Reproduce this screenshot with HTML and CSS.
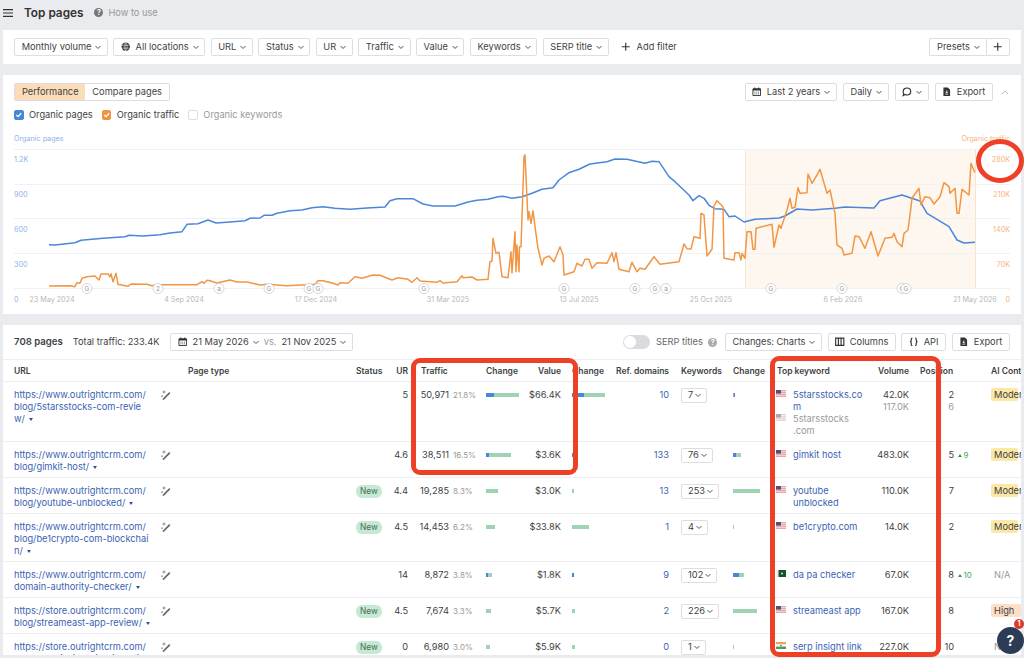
FILE: index.html
```html
<!DOCTYPE html>
<html lang="en">
<head>
  <meta charset="UTF-8">
  <meta name="viewport" content="width=device-width, initial-scale=1.0">
  <title>Top pages</title>
  <link rel="stylesheet" href="styles.css">
</head>
<body>

<!-- shared icons -->
<svg class="defs" width="0" height="0">
  <symbol id="chev" viewBox="0 0 8 8"><path d="M1.5 3l2.5 2.5L6.5 3" fill="none" stroke="currentColor" stroke-width="1"/></symbol>
  <symbol id="plus" viewBox="0 0 10 10"><path d="M5 .8v8.4M.8 5h8.4" fill="none" stroke="currentColor" stroke-width="1.2"/></symbol>
  <symbol id="cal" viewBox="0 0 10 10"><path d="M1 2h8v7H1z" fill="none" stroke="currentColor" stroke-width="1"/><path d="M1 1.600h8v2.200H1zM2.400.6h1v1.500h-1zM6.600.6h1v1.500h-1zM2.600 5h1v.9h-1zM4.500 5h1v.9h-1zM6.400 5h1v.9h-1zM2.600 6.800h1v.9h-1zM4.500 6.800h1v.9h-1zM6.400 6.800h1v.9h-1z" fill="currentColor"/></symbol>
  <symbol id="doc" viewBox="0 0 10 10"><path d="M1.500.5h4.600L8.500 3v6.500h-7z" fill="currentColor"/><path d="M5 3.600v2.600M3.700 5l1.300 1.400L6.300 5M3.400 7.500h3.200" fill="none" stroke="#fff" stroke-width=".8"/></symbol>
  <symbol id="wand" viewBox="0 0 10 10"><path d="M2 9.500L8.800 2.700" fill="none" stroke="#666" stroke-width="1.700"/><path d="M3 .5v3M1.500 2h3M1 5.500v1.500M.3 6.200h1.500" fill="none" stroke="#777" stroke-width=".8"/></symbol>
  <symbol id="us" viewBox="0 0 10 7"><rect width="10" height="7" fill="#e9a5a8"/><path d="M0 1.500h10M0 3.500h10M0 5.500h10" stroke="#f3dcdc" stroke-width=".8"/><rect width="5" height="3.600" fill="#47557f"/></symbol>
  <symbol id="pk" viewBox="0 0 10 7"><rect width="10" height="7" fill="#14532d"/><rect width="2.500" height="7" fill="#eee"/><circle cx="6" cy="3.500" r="1" fill="#cfe3d5"/></symbol>
  <symbol id="in" viewBox="0 0 10 7"><rect width="10" height="2.400" fill="#f0a04e"/><rect y="2.400" width="10" height="2.200" fill="#f6f6f6"/><rect y="4.600" width="10" height="2.400" fill="#4f9a55"/><circle cx="5" cy="3.500" r=".8" fill="#47557f"/></symbol>
</svg>

<div class="page-head">
  <svg class="burger" width="10" height="8" viewBox="0 0 10 8"><path d="M0 .7h10M0 4h10M0 7.300h10" stroke="#333" stroke-width="1.200"/></svg>
  <h1>Top pages</h1>
  <span class="how-dot">?</span>
  <span class="how-text">How to use</span>
</div>

<div class="card filters">
  <button class="btn">Monthly volume <svg class="chev"><use href="#chev"/></svg></button>
  <button class="btn">
    <svg class="ico" viewBox="0 0 10 10"><circle cx="5" cy="5" r="4.400" fill="#333"/><path d="M.8 3.500h8.400M.8 6.500h8.400M5 .6v8.800M5 .6C2.800 3 2.800 7 5 9.400M5 .6C7.200 3 7.200 7 5 9.400" fill="none" stroke="#fff" stroke-width=".5"/></svg>
    All locations <svg class="chev"><use href="#chev"/></svg>
  </button>
  <button class="btn">URL <svg class="chev"><use href="#chev"/></svg></button>
  <button class="btn">Status <svg class="chev"><use href="#chev"/></svg></button>
  <button class="btn">UR <svg class="chev"><use href="#chev"/></svg></button>
  <button class="btn">Traffic <svg class="chev"><use href="#chev"/></svg></button>
  <button class="btn">Value <svg class="chev"><use href="#chev"/></svg></button>
  <button class="btn">Keywords <svg class="chev"><use href="#chev"/></svg></button>
  <button class="btn">SERP title <svg class="chev"><use href="#chev"/></svg></button>
  <span class="add-filter"><svg class="ico"><use href="#plus"/></svg>Add filter</span>
  <span class="btn-group">
    <button class="btn">Presets <svg class="chev"><use href="#chev"/></svg></button>
    <button class="btn btn-plus"><svg class="ico"><use href="#plus"/></svg></button>
  </span>
</div>

<div class="card chart-card">
  <div class="chart-top">
    <div class="tabs">
      <span class="tab tab-on">Performance</span>
      <span class="tab">Compare pages</span>
    </div>
    <div class="chart-tools">
      <button class="btn"><svg class="ico"><use href="#cal"/></svg> Last 2 years <svg class="chev"><use href="#chev"/></svg></button>
      <button class="btn">Daily <svg class="chev"><use href="#chev"/></svg></button>
      <button class="btn"><svg class="ico" viewBox="0 0 10 10"><path d="M5.300 1C7.600 1 9.200 2.600 9.200 4.700S7.600 8.400 5.300 8.400C4.500 8.400 3.800 8.200 3.200 7.900L1.200 9 1.800 6.800C1.400 6.200 1.200 5.500 1.200 4.700 1.200 2.600 3 1 5.300 1z" fill="none" stroke="#333" stroke-width="1.200"/></svg> <svg class="chev"><use href="#chev"/></svg></button>
      <button class="btn"><svg class="ico"><use href="#doc"/></svg> Export</button>
      <svg class="collapse" viewBox="0 0 10 6"><path d="M1 5l4-4 4 4" fill="none" stroke="#aaa" stroke-width="1"/></svg>
    </div>
  </div>
  <div class="checks">
    <span class="check"><span class="box box-blue"><svg viewBox="0 0 10 10"><path d="M2.500 5.200l1.800 1.800 3.300-3.600" fill="none" stroke="#fff" stroke-width="1.300"/></svg></span>Organic pages</span>
    <span class="check"><span class="box box-orange"><svg viewBox="0 0 10 10"><path d="M2.500 5.200l1.800 1.800 3.300-3.600" fill="none" stroke="#fff" stroke-width="1.300"/></svg></span>Organic traffic</span>
    <span class="check check-off"><span class="box"></span>Organic keywords</span>
  </div>

  <svg class="chart" width="1018" height="180" viewBox="3 130 1018 180">
    <rect x="745" y="149" width="231" height="139" fill="#fdf7f0"/>
    <path d="M745.500 149v139M975.500 149v139" stroke="#fae3cc" stroke-width="1"/>
    <path class="grid" d="M14 149.500h996M14 184.500h996M14 218.500h996M14 253.500h996M14 288.500h996"/>

    <text class="lbl-blue" x="14" y="141">Organic pages</text>
    <text class="lbl-blue" x="14" y="162">1.2K</text>
    <text class="lbl-blue" x="14" y="197">900</text>
    <text class="lbl-blue" x="14" y="232">600</text>
    <text class="lbl-blue" x="14" y="267">300</text>
    <text class="lbl-blue" x="14" y="302">0</text>

    <text class="lbl-orange" x="1010" y="141">Organic traffic</text>
    <text class="lbl-orange" x="1010" y="162">280K</text>
    <text class="lbl-orange" x="1010" y="197">210K</text>
    <text class="lbl-orange" x="1010" y="232">140K</text>
    <text class="lbl-orange" x="1010" y="267">70K</text>
    <text class="lbl-orange" x="1010" y="302">0</text>

    <text class="lbl-date" x="52" y="302">23 May 2024</text>
    <text class="lbl-date" x="184" y="302">4 Sep 2024</text>
    <text class="lbl-date" x="316" y="302">17 Dec 2024</text>
    <text class="lbl-date" x="448" y="302">31 Mar 2025</text>
    <text class="lbl-date" x="579" y="302">13 Jul 2025</text>
    <text class="lbl-date" x="711" y="302">25 Oct 2025</text>
    <text class="lbl-date" x="843" y="302">6 Feb 2026</text>
    <text class="lbl-date" x="975" y="302">21 May 2026</text>

    <path class="line-blue" d="M49 244.700L55 245L75 242.700L81 240.300L103 238.300L125 236.700L129 235.300L143 236L160 234.700L170 233L182 231.700L187 224.300L198 223.700L208 220L216 223L230 222L245 220.700L250 218.300L260 218L264 215.300L272 215.300L277 213.300L290 210.700L302 210L312 207.700L323 206.700L335 208.300L350 209.300L367 208L385 207L390 200.700L397 198.700L413 198.700L423 204L433 206L455 206L468 202L477 200.300L488 199.300L498 196.700L503 196.300L512 198.300L522 196.700L532 193.300L542 189.300L553 187.700L559 180L569 172.700L579 169.300L590 164L607 161.700L615 159L627 159.300L645 163.300L652 161.300L659 161.700L669 176.700L675 181.700L689 195L693 200.700L699 195.700L704 198.300L709 205.300L715 208.700L724 209.300L729 216.700L735 216L744 222L755 219.300L779 218L785 216L797 209L812 210L835 208.300L845 207L874 208L880 200.700L902 195L920 201L927 213.300L949 226.700L957 240L964 243L975 242.300"/>
    <path class="line-orange" d="M49 286L70 285.700L75 286.700L77 282.700L80 283.300L82 278.300L87 276.700L95 276L99 280L101 274L108 274L110 276.700L111 273.700L113 281.700L116 273.300L118 284.300L128 286.300L131 284L147 284.300L152 285.700L157 284.700L197 284.700L202 281.700L204 283.300L207 280.300L210 280.700L217 283L230 280L237 282L247 282L260 285L267 284.300L287 285.700L315 284.300L318 280.700L323 280.700L333 283.300L338 285L340 282.700L348 283.300L355 276.700L362 278.300L373 275L380 275.300L392 280L398 277.700L408 279.300L412 282.300L417 277.700L420 281L437 282.300L440 280.700L443 283L457 281.700L462 275.700L463 277.700L472 277L477 280L488 279.300L490 261.700L492 261L493 238.300L496 253.300L499 252.300L502 276.700L508 277.700L511 251.700L512 273L515 231.700L516 271.700L517 245L519 271.700L519.500 246.700L521 246.700L524 156.700L525 155L528 220L529 211.700L531 223.300L533 210.700L535 226.700L538 248.300L542 265L544 258.300L549 256L554 261.700L560 246.700L563 255L564 275L574 271.700L577 263.300L582 266L585 259.300L589 259.300L592 268.300L597 262.700L607 263.300L612 252.700L614 261.700L616 252.700L619 269.300L629 271.700L632 262.300L637 271.700L640 268.300L645 269.300L654 256.700L660 264.300L679 261.700L684 244L687 248.700L691 249L694 236.700L700 238.300L701 213.300L704 215L707 256L712 249.300L714 206L717 200.700L723 206.700L724 258.300L734 260L735 252.700L739 252.700L741 260L742 253.300L745 258.300L747 231.700L751 231.700L753 249.300L755 249.300L756 228.300L772 224.300L774 247.300L776 238.300L779 225L781 228.300L787 210L790 198.300L792 208.300L795 207.300L798 187.700L800 193.300L807 192.700L808 174L812 183.300L817 175L820 169.300L827 193.300L830 190L835 213.300L837 245L842 248.300L844 255L852 253.300L855 236L859 236.700L865 248.300L871 231.700L878 256L885 238.300L892 237.300L894 233.300L897 241.700L902 246.700L904 233.300L908 230L910 215L912 198.300L919 188.300L921 205L925 196.700L930 197.700L934 204L940 196.700L944 182.700L949 186.700L950 193.300L955 188.300L957 213.300L959 213.300L962 189.300L969 195L971 163.300L974 170.700L975 172.300"/>

    <g class="marks">
      <circle cx="87" cy="288.500" r="5"/><text x="87" y="291">G</text>
      <circle cx="158" cy="288.500" r="5"/><text x="158" y="291">2</text>
      <circle cx="219" cy="288.500" r="5"/><text x="219" y="291">a</text>
      <circle cx="269" cy="288.500" r="5"/><text x="269" y="291">G</text>
      <circle cx="309" cy="288.500" r="5"/><text x="309" y="291">G</text>
      <circle cx="318" cy="288.500" r="5"/><text x="318" y="291">G</text>
      <circle cx="424" cy="288.500" r="5"/><text x="424" y="291">G</text>
      <circle cx="564" cy="288.500" r="5"/><text x="564" y="291">G</text>
      <circle cx="635" cy="288.500" r="5"/><text x="635" y="291">G</text>
      <circle cx="655" cy="288.500" r="5"/><text x="655" y="291">G</text>
      <circle cx="666" cy="288.500" r="5"/><text x="666" y="291">a</text>
      <circle cx="771" cy="288.500" r="5"/><text x="771" y="291">G</text>
      <circle cx="842" cy="288.500" r="5"/><text x="842" y="291">G</text>
      <circle cx="902" cy="288.500" r="5"/><text x="902" y="291">G</text>
      <circle cx="906" cy="288.500" r="5"/><text x="906" y="291">G</text>
    </g>
  </svg>
</div>

<div class="card table-card">
  <div class="table-top">
    <strong class="count">708 pages</strong>
    <span class="total">Total traffic: 233.4K</span>
    <button class="btn btn-dates">
      <svg class="ico"><use href="#cal"/></svg> 21 May 2026 <svg class="chev"><use href="#chev"/></svg>
      <span class="vs">vs.</span>
      21 Nov 2025 <svg class="chev"><use href="#chev"/></svg>
    </button>
    <span class="table-tools">
      <span class="toggle"><span class="knob"></span></span>
      <span class="serp">SERP titles</span>
      <span class="how-dot how-dot-sm">?</span>
      <button class="btn">Changes: Charts <svg class="chev"><use href="#chev"/></svg></button>
      <button class="btn"><svg class="ico" viewBox="0 0 10 10"><path d="M.7 1.200h8.600v7.600H.7zM3.600 1.200v7.600M6.400 1.200v7.600" fill="none" stroke="#333" stroke-width="1.200"/></svg> Columns</button>
      <button class="btn"><svg class="ico" viewBox="0 0 10 10"><path d="M3.600 1C2 1 2.500 2.500 2.400 3.600 2.300 4.600 1.800 5 1 5c.8 0 1.300.4 1.400 1.400C2.500 7.500 2 9 3.600 9M6.400 1C8 1 7.500 2.500 7.600 3.600 7.700 4.600 8.200 5 9 5c-.8 0-1.300.4-1.400 1.400C7.500 7.500 8 9 6.400 9" fill="none" stroke="#333" stroke-width="1.200"/></svg> API</button>
      <button class="btn"><svg class="ico"><use href="#doc"/></svg> Export</button>
    </span>
  </div>

  <table class="pages">
    <colgroup>
      <col class="c-url"><col class="c-wand"><col class="c-type"><col class="c-status"><col class="c-ur">
      <col class="c-traffic"><col class="c-pct"><col class="c-change"><col class="c-value"><col class="c-change2">
      <col class="c-ref"><col class="c-kws"><col class="c-change3"><col class="c-top"><col class="c-vol">
      <col class="c-pos"><col class="c-delta"><col class="c-ai">
    </colgroup>
    <thead>
      <tr>
        <th class="first" colspan="2">URL</th>
        <th>Page type</th>
        <th class="status">Status</th>
        <th class="num">UR</th>
        <th class="traffic-head" colspan="2">Traffic</th>
        <th>Change</th>
        <th class="num">Value</th>
        <th class="change2">Change</th>
        <th class="num">Ref. domains</th>
        <th class="kws">Keywords</th>
        <th>Change</th>
        <th class="top-head">Top keyword</th>
        <th class="num">Volume</th>
        <th class="pos-head" colspan="2">Position</th>
        <th class="ai">AI Content</th>
      </tr>
    </thead>
    <tbody>
      <tr>
        <td class="first"><a class="link">https://www.outrightcrm.com/<br>blog/5starsstocks-com-review/</a><i class="caret"></i></td>
        <td><svg class="wand"><use href="#wand"/></svg></td>
        <td></td>
        <td class="status"></td>
        <td class="num">5</td>
        <td class="num">50,971</td>
        <td class="pct">21.8%</td>
        <td><span class="bar"><i class="blue" style="width:8px"></i><i class="green" style="width:25px"></i></span></td>
        <td class="num">$66.4K</td>
        <td class="change2"><span class="bar"><i class="blue" style="width:12px"></i><i class="green" style="width:21px"></i></span></td>
        <td class="num link">10</td>
        <td class="kws"><span class="sel">7<svg class="chev"><use href="#chev"/></svg></span></td>
        <td><span class="bar"><i class="red" style="width:1px"></i><i class="blue" style="width:1px"></i></span></td>
        <td>
          <div class="kw"><svg class="flag"><use href="#us"/></svg><a class="link">5starsstocks.com</a></div>
          <div class="kw kw-dim"><svg class="flag"><use href="#us"/></svg><span>5starsstocks<br>.com</span></div>
        </td>
        <td class="num">42.0K<br><span class="dim">117.0K</span></td>
        <td class="num">2<br><span class="dim">6</span></td>
        <td></td>
        <td class="ai"><span class="tag tag-mod">Moderate</span></td>
      </tr>
      <tr>
        <td class="first"><a class="link">https://www.outrightcrm.com/<br>blog/gimkit-host/</a><i class="caret"></i></td>
        <td><svg class="wand"><use href="#wand"/></svg></td>
        <td></td>
        <td class="status"></td>
        <td class="num">4.6</td>
        <td class="num">38,511</td>
        <td class="pct">16.5%</td>
        <td><span class="bar"><i class="blue" style="width:3px"></i><i class="green" style="width:22px"></i></span></td>
        <td class="num">$3.6K</td>
        <td class="change2"><span class="bar"><i class="blue" style="width:1px"></i></span></td>
        <td class="num link">133</td>
        <td class="kws"><span class="sel">76<svg class="chev"><use href="#chev"/></svg></span></td>
        <td><span class="bar"><i class="blue" style="width:3px"></i><i class="green" style="width:5px"></i></span></td>
        <td><div class="kw"><svg class="flag"><use href="#us"/></svg><a class="link">gimkit host</a></div></td>
        <td class="num">483.0K</td>
        <td class="num">5</td>
        <td class="delta"><i class="up"></i>9</td>
        <td class="ai"><span class="tag tag-mod">Moderate</span></td>
      </tr>
      <tr>
        <td class="first"><a class="link">https://www.outrightcrm.com/<br>blog/youtube-unblocked/</a><i class="caret"></i></td>
        <td><svg class="wand"><use href="#wand"/></svg></td>
        <td></td>
        <td class="status"><span class="new">New</span></td>
        <td class="num">4.4</td>
        <td class="num">19,285</td>
        <td class="pct">8.3%</td>
        <td><span class="bar"><i class="green" style="width:12px"></i></span></td>
        <td class="num">$3.0K</td>
        <td class="change2"><span class="bar"><i class="green" style="width:2px"></i></span></td>
        <td class="num link">13</td>
        <td class="kws"><span class="sel">253<svg class="chev"><use href="#chev"/></svg></span></td>
        <td><span class="bar"><i class="green" style="width:27px"></i></span></td>
        <td><div class="kw"><svg class="flag"><use href="#us"/></svg><a class="link">youtube<br>unblocked</a></div></td>
        <td class="num">110.0K</td>
        <td class="num">7</td>
        <td></td>
        <td class="ai"><span class="tag tag-mod">Moderate</span></td>
      </tr>
      <tr>
        <td class="first"><a class="link">https://www.outrightcrm.com/<br>blog/be1crypto-com-blockchain/</a><i class="caret"></i></td>
        <td><svg class="wand"><use href="#wand"/></svg></td>
        <td></td>
        <td class="status"><span class="new">New</span></td>
        <td class="num">4.5</td>
        <td class="num">14,453</td>
        <td class="pct">6.2%</td>
        <td><span class="bar"><i class="green" style="width:9px"></i></span></td>
        <td class="num">$33.8K</td>
        <td class="change2"><span class="bar"><i class="green" style="width:17px"></i></span></td>
        <td class="num link">1</td>
        <td class="kws"><span class="sel">4<svg class="chev"><use href="#chev"/></svg></span></td>
        <td><span class="bar"><i class="green" style="width:1px"></i></span></td>
        <td><div class="kw"><svg class="flag"><use href="#us"/></svg><a class="link">be1crypto.com</a></div></td>
        <td class="num">14.0K</td>
        <td class="num">2</td>
        <td></td>
        <td class="ai"><span class="tag tag-mod">Moderate</span></td>
      </tr>
      <tr>
        <td class="first"><a class="link">https://www.outrightcrm.com/<br>domain-authority-checker/</a><i class="caret"></i></td>
        <td><svg class="wand"><use href="#wand"/></svg></td>
        <td></td>
        <td class="status"></td>
        <td class="num">14</td>
        <td class="num">8,872</td>
        <td class="pct">3.8%</td>
        <td><span class="bar"><i class="blue" style="width:2px"></i><i class="green" style="width:4px"></i></span></td>
        <td class="num">$1.8K</td>
        <td class="change2"><span class="bar"><i class="blue" style="width:2px"></i></span></td>
        <td class="num link">9</td>
        <td class="kws"><span class="sel">102<svg class="chev"><use href="#chev"/></svg></span></td>
        <td><span class="bar"><i class="blue" style="width:6px"></i><i class="green" style="width:5px"></i></span></td>
        <td><div class="kw"><svg class="flag"><use href="#pk"/></svg><a class="link">da pa checker</a></div></td>
        <td class="num">67.0K</td>
        <td class="num">8</td>
        <td class="delta"><i class="up"></i>10</td>
        <td class="ai"><span class="na">N/A</span></td>
      </tr>
      <tr>
        <td class="first"><a class="link">https://store.outrightcrm.com/<br>blog/streameast-app-review/</a><i class="caret"></i></td>
        <td><svg class="wand"><use href="#wand"/></svg></td>
        <td></td>
        <td class="status"><span class="new">New</span></td>
        <td class="num">4.5</td>
        <td class="num">7,674</td>
        <td class="pct">3.3%</td>
        <td><span class="bar"><i class="green" style="width:5px"></i></span></td>
        <td class="num">$5.7K</td>
        <td class="change2"><span class="bar"><i class="green" style="width:3px"></i></span></td>
        <td class="num link">2</td>
        <td class="kws"><span class="sel">226<svg class="chev"><use href="#chev"/></svg></span></td>
        <td><span class="bar"><i class="green" style="width:24px"></i></span></td>
        <td><div class="kw"><svg class="flag"><use href="#us"/></svg><a class="link">streameast app</a></div></td>
        <td class="num">167.0K</td>
        <td class="num">8</td>
        <td></td>
        <td class="ai"><span class="tag tag-high">High</span></td>
      </tr>
      <tr>
        <td class="first"><a class="link">https://store.outrightcrm.com/<br>blog/serp-insight-link-insertion/</a><i class="caret"></i></td>
        <td><svg class="wand"><use href="#wand"/></svg></td>
        <td></td>
        <td class="status"><span class="new">New</span></td>
        <td class="num">0</td>
        <td class="num">6,980</td>
        <td class="pct">3.0%</td>
        <td><span class="bar"><i class="green" style="width:4px"></i></span></td>
        <td class="num">$5.9K</td>
        <td class="change2"><span class="bar"><i class="green" style="width:3px"></i></span></td>
        <td class="num link">0</td>
        <td class="kws"><span class="sel">1<svg class="chev"><use href="#chev"/></svg></span></td>
        <td><span class="bar"><i class="green" style="width:1px"></i></span></td>
        <td><div class="kw"><svg class="flag"><use href="#in"/></svg><a class="link">serp insight link</a></div></td>
        <td class="num">227.0K</td>
        <td class="num">10</td>
        <td></td>
        <td class="ai"><span class="na">N/A</span></td>
      </tr>
    </tbody>
  </table>
</div>

<!-- red annotations drawn over the screenshot -->
<div class="mark mark-value"></div>
<div class="mark mark-keyword"></div>
<div class="mark mark-circle"></div>

<div class="help">?<span class="help-badge">1</span></div>

</body>
</html>
```

FILE: styles.css
```css
/* base */
body {
  margin: 0;
  height: 658px;
  overflow: hidden;
  background-color: #e9ebee;
  color: #3d3f44;
  font-family: Inter, "Liberation Sans", sans-serif;
  font-size: 9.25px;
  line-height: 12px;
}
button {
  font: inherit;
  color: inherit;
}
.defs {
  position: absolute;
}

/* page title */
.page-head {
  display: flex;
  align-items: center;
  height: 25px;
  padding: 0 0 5px 3px;
}
.burger {
  margin-right: 11px;
}
h1 {
  margin: 0 11px 0 0;
  font-size: 11.8px;
  font-weight: 600;
  color: #333;
}
.how-dot {
  display: inline-flex;
  justify-content: center;
  align-items: center;
  width: 9px;
  height: 9px;
  border-radius: 50%;
  background-color: #777;
  color: white;
  font-size: 7px;
  font-weight: 700;
  line-height: 9px;
}
.how-text {
  margin-left: 5px;
  color: #999;
}

/* shared */
.card {
  margin-left: 3px;
  margin-right: 3px;
  background-color: white;
}
.btn {
  display: inline-flex;
  align-items: center;
  gap: 5px;
  flex: none;
  height: 18px;
  padding: 0 6.7px;
  background-color: white;
  border: 1px solid #dcdee2;
  border-radius: 2px;
  white-space: nowrap;
}
.chev {
  width: 8px;
  height: 8px;
  flex: none;
  margin: 0 -2px 0 -2px;
  color: #555;
}
.ico {
  width: 9.5px;
  height: 9.5px;
  flex: none;
  color: #333;
}

/* filter bar */
.filters {
  display: flex;
  align-items: center;
  gap: 5.3px;
  height: 34px;
  padding: 0 11px;
}
.add-filter {
  display: flex;
  align-items: center;
  gap: 6px;
  margin-left: 7px;
}
.btn-group {
  display: flex;
  margin-left: auto;
}
.btn-group .btn:first-child {
  border-right: none;
  border-radius: 2px 0 0 2px;
}
.btn-group .btn-plus {
  padding: 0 6.5px;
  border-radius: 0 2px 2px 0;
}

/* chart */
.chart-card {
  height: 239px;
  margin-top: 11px;
  padding-top: 8px;
  box-sizing: border-box;
}
.chart-top {
  display: flex;
  justify-content: space-between;
  padding: 0 11px;
}
.tabs {
  display: flex;
  height: 18px;
  box-sizing: border-box;
  border: 1px solid #dcdee2;
  border-radius: 2px;
}
.tab {
  padding: 0 6.9px;
  line-height: 16px;
}
.tab-on {
  background-color: #fbdcb8;
}
.chart-tools {
  display: flex;
  align-items: center;
  gap: 6px;
}
.collapse {
  width: 8px;
  height: 5px;
  margin-left: 2px;
  margin-right: 1px;
}
.checks {
  display: flex;
  gap: 9px;
  height: 12px;
  margin-top: 8px;
  padding-left: 11px;
}
.check {
  display: flex;
  align-items: center;
  gap: 5.5px;
}
.check-off {
  color: #999;
}
.box {
  width: 9.5px;
  height: 9.5px;
  box-sizing: border-box;
  border: 1px solid #ddd;
  border-radius: 2px;
}
.box svg {
  display: block;
  width: 9.5px;
  height: 9.5px;
  margin: -1px;
}
.box-blue {
  background-color: #4a86d8;
  border-color: #4a86d8;
}
.box-orange {
  background-color: #f0923f;
  border-color: #f0923f;
}
.chart {
  display: block;
  margin-top: 9px;
}
.chart text {
  font-family: Inter, "Liberation Sans", sans-serif;
  font-size: 7.2px;
}
.grid {
  stroke: #f0f1f3;
  stroke-width: 1;
  fill: none;
}
.lbl-blue {
  fill: #8eb3ea;
}
.lbl-orange {
  fill: #f9b27c;
  text-anchor: end;
}
.lbl-date {
  fill: #b5b7bb;
  text-anchor: middle;
}
.line-blue,
.line-orange {
  fill: none;
  stroke-width: 1.5;
  stroke-linejoin: round;
}
.line-blue {
  stroke: #4c86d9;
}
.line-orange {
  stroke: #f29646;
}
.marks circle {
  fill: white;
  stroke: #d5d6d9;
  stroke-width: 1;
}
.chart .marks text {
  fill: #999;
  font-size: 6.5px;
  text-anchor: middle;
}

/* table */
.table-card {
  height: 330px;
  margin-top: 11px;
  overflow: hidden;
}
.table-top {
  display: flex;
  align-items: center;
  height: 34px;
  padding: 0 11px;
  border-bottom: 1px solid #eceef0;
}
.count {
  font-size: 9.6px;
  font-weight: 600;
}
.total {
  margin-left: 10px;
}
.btn-dates {
  margin-left: 11px;
}
.vs {
  margin: 0 0 0 1px;
  color: #999;
}
.table-tools {
  display: flex;
  align-items: center;
  gap: 5.5px;
  margin-left: auto;
}
.toggle {
  width: 27px;
  height: 14px;
  margin-right: 1px;
  border-radius: 7px;
  background-color: #d9dbdf;
}
.knob {
  display: block;
  width: 12px;
  height: 12px;
  margin: 1px;
  border-radius: 50%;
  background-color: white;
}
.serp {
  color: #666;
}
.how-dot-sm {
  margin-right: 2px;
  background-color: #aaa;
}

.pages {
  width: 1018px;
  table-layout: fixed;
  border-collapse: separate;
  border-spacing: 0;
}
.c-url { width: 155px; }
.c-wand { width: 30px; }
.c-type { width: 162px; }
.c-status { width: 36px; }
.c-ur { width: 22px; }
.c-traffic { width: 41px; }
.c-pct { width: 37px; }
.c-change { width: 40px; }
.c-value { width: 35px; }
.c-change2 { width: 49px; }
.c-ref { width: 59px; }
.c-kws { width: 64px; }
.c-change3 { width: 43px; }
.c-top { width: 90px; }
.c-vol { width: 43px; }
.c-pos { width: 45px; }
.c-delta { width: 31px; }
.c-ai { width: 36px; }

th {
  height: 22px;
  padding: 0;
  box-sizing: border-box;
  border-bottom: 1px solid #eceef0;
  font-size: 8.5px;
  font-weight: 600;
  text-align: left;
  white-space: nowrap;
}
td {
  padding: 7px 0 4px;
  border-bottom: 1px solid #eceef0;
  vertical-align: top;
}
.first {
  padding-left: 11px;
}
td.first {
  padding-right: 8px;
}
.num {
  text-align: right;
}
.status {
  padding-left: 6px;
}
.traffic-head {
  padding-left: 13px;
}
.top-head {
  padding-left: 1px;
}
.pct {
  padding-left: 4px;
  color: #999;
  font-size: 8px;
}
.change2 {
  padding-left: 11px;
}
.kws {
  padding-left: 12px;
}
.pos-head {
  padding-left: 11px;
}
.ai {
  padding-left: 6px;
  overflow: hidden;
  white-space: nowrap;
}
.link {
  color: #3c5fb3;
}
td.first .link {
  word-break: break-all;
}
.caret {
  display: inline-block;
  margin-left: 4px;
  margin-right: -8px;
  vertical-align: 1px;
  border-left: 2.5px solid transparent;
  border-right: 2.5px solid transparent;
  border-top: 3px solid #2f4f9f;
}
.wand {
  display: block;
  width: 10px;
  height: 10px;
  margin: 1px 0 0 3px;
}
.new {
  display: inline-block;
  padding: 0 4px;
  margin-top: -1px;
  border-radius: 6px;
  background-color: #c6e9d3;
  color: #4a6a58;
  font-size: 8.3px;
  line-height: 13px;
}
.bar {
  display: flex;
  height: 4px;
  margin-top: 4px;
}
.bar i {
  display: block;
}
.blue {
  background-color: #4c86d9;
}
.green {
  background-color: #9fd4b2;
}
.red {
  background-color: #e58a9a;
}
.sel {
  display: inline-flex;
  align-items: center;
  gap: 3px;
  height: 15px;
  padding: 0 6px;
  margin-top: -1.5px;
  box-sizing: border-box;
  border: 1px solid #dcdee2;
  border-radius: 2px;
}
.kw {
  display: flex;
  gap: 7px;
}
.kw .link {
  width: 72px;
  word-break: break-all;
}
.kw-dim {
  color: #999;
}
.kw-dim .flag {
  opacity: 0.5;
}
.flag {
  width: 10px;
  height: 7px;
  flex: none;
  margin-top: 1px;
}
.dim {
  color: #999;
}
.delta {
  padding-left: 4px;
  color: #4aa564;
  font-size: 8px;
}
.up {
  display: inline-block;
  margin-right: 1.5px;
  vertical-align: 1px;
  border-left: 2.5px solid transparent;
  border-right: 2.5px solid transparent;
  border-bottom: 3px solid #2f9a50;
}
.tag {
  display: inline-block;
  padding-left: 3px;
  border-radius: 2px;
  margin-top: -1px;
  line-height: 13px;
}
.tag-mod {
  width: 24px;
  background-color: #fbe8a6;
}
.tag-high {
  width: 27px;
  background-color: #fcdfc6;
}
.na {
  padding-left: 3px;
  color: #999;
}

/* red annotations */
.mark {
  position: absolute;
  box-sizing: border-box;
  border: 5px solid #ee4027;
}
.mark-value {
  left: 411px;
  top: 358px;
  width: 167px;
  height: 117px;
  border-radius: 9px;
}
.mark-keyword {
  left: 770px;
  top: 356px;
  width: 171px;
  height: 301px;
  border-radius: 9px;
}
.mark-circle {
  left: 976px;
  top: 139px;
  width: 48px;
  height: 44px;
  border-radius: 50%;
}

/* help button */
.help {
  position: absolute;
  left: 997px;
  top: 627px;
  width: 27px;
  height: 27px;
  border-radius: 50%;
  background-color: #2c3c57;
  color: white;
  font-size: 14px;
  font-weight: 700;
  line-height: 27px;
  text-align: center;
}
.help-badge {
  position: absolute;
  left: 17px;
  top: -8px;
  width: 10px;
  height: 10px;
  border-radius: 50%;
  background-color: #d93a2b;
  font-size: 7px;
  line-height: 10px;
}
```
